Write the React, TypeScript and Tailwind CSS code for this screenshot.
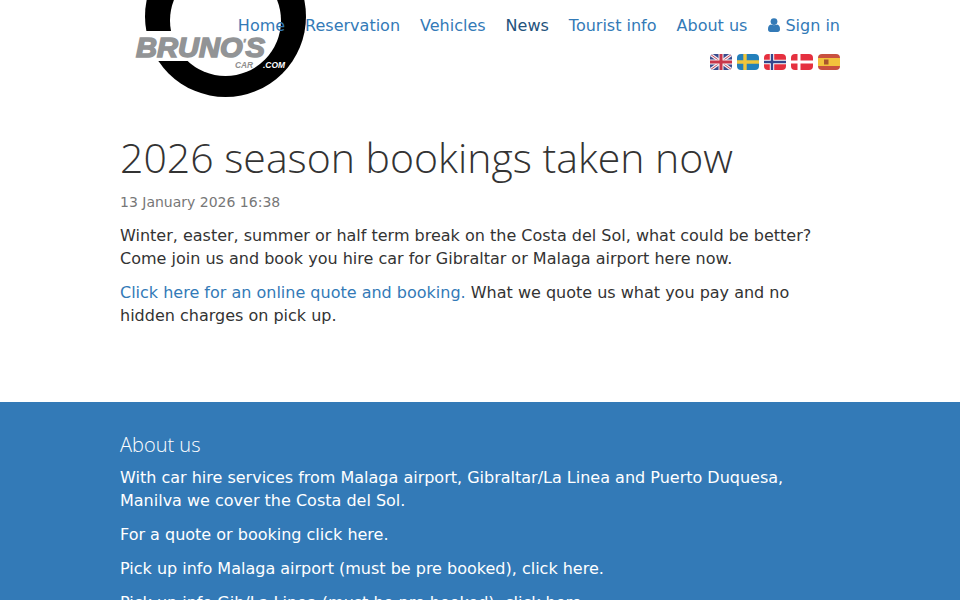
const navItems = ['Home', 'Reservation', 'Vehicles', 'News', 'Tourist info', 'About us']

const Logo = () => (
  <svg className="absolute left-0 top-0" width="200" height="105" viewBox="0 0 200 105" aria-label="Brunos Car">
    <circle cx="105.5" cy="16.5" r="80.5" fill="#000" />
    <circle cx="105.5" cy="20.5" r="55.5" fill="#fff" />
    {/* white band behind the wordmark */}
    <path d="M10 31 L70 31 L70 61 L10 61 Z" fill="#fff" />
    <text
      x="16"
      y="56.5"
      textLength="129"
      lengthAdjust="spacingAndGlyphs"
      fontFamily="Liberation Sans, sans-serif"
      fontWeight="700"
      fontStyle="italic"
      fontSize="27"
      fill="#929496"
      stroke="#929496"
      strokeWidth="1.5"
    >
      BRUNO
      <tspan fontSize="12" dy="-9" strokeWidth="0.5">
        '
      </tspan>
      <tspan dy="9">S</tspan>
    </text>
    <text x="115" y="68" textLength="18" lengthAdjust="spacingAndGlyphs" fontFamily="Liberation Sans, sans-serif" fontWeight="700" fontStyle="italic" fontSize="8.5" fill="#8f8f8f">
      CAR
    </text>
    <text x="143" y="68" textLength="22" lengthAdjust="spacingAndGlyphs" fontFamily="Liberation Sans, sans-serif" fontWeight="700" fontStyle="italic" fontSize="8.5" fill="#fff">
      .COM
    </text>
  </svg>
)

const Flag = ({ children }: { children: React.ReactNode }) => (
  <svg width="22" height="16" viewBox="0 0 22 16" className="rounded-[4px]">
    {children}
  </svg>
)

const Flags = () => (
  <div className="flex justify-end gap-[5px]">
    <Flag>
      <rect width="22" height="16" fill="#3a4a8c" />
      <path d="M0 0L22 16M22 0L0 16" stroke="#f4f0f2" strokeWidth="3.2" />
      <path d="M0 0L22 16M22 0L0 16" stroke="#c8475c" strokeWidth="1" />
      <path d="M11 0V16M0 8H22" stroke="#f4f0f2" strokeWidth="5" />
      <path d="M11 0V16M0 8H22" stroke="#c8354a" strokeWidth="3" />
    </Flag>
    <Flag>
      <rect width="22" height="16" fill="#2380bb" />
      <path d="M8 0V16M0 8H22" stroke="#f0c53c" strokeWidth="3.4" />
    </Flag>
    <Flag>
      <rect width="22" height="16" fill="#e5303f" />
      <path d="M8 0V16M0 8H22" stroke="#fff" strokeWidth="4.4" />
      <path d="M8 0V16M0 8H22" stroke="#34478c" strokeWidth="2.4" />
    </Flag>
    <Flag>
      <rect width="22" height="16" fill="#e5303f" />
      <path d="M8 0V16M0 8H22" stroke="#fff" strokeWidth="3" />
    </Flag>
    <Flag>
      <rect width="22" height="16" fill="#c8503f" />
      <rect y="4" width="22" height="8" fill="#f2c23c" />
      <rect x="6" y="5.5" width="4.5" height="5" fill="#a8552c" />
    </Flag>
  </div>
)

const UserIcon = () => (
  <svg width="12" height="14" viewBox="0 0 12 14" fill="#337ab7" className="mr-[5px] inline-block align-[-1px]">
    <circle cx="6" cy="3.6" r="3.4" />
    <path d="M0 11.2C0 8.6 1 6.9 3 6.6C4 7.4 8 7.4 9 6.6C11 6.9 12 8.6 12 11.2C12 13 11 14 9.6 14H2.4C1 14 0 13 0 11.2Z" />
  </svg>
)

export default function App() {
  return (
    <div className="h-[600px] overflow-hidden bg-white font-['DejaVu_Sans',sans-serif] text-base leading-[23px] text-[#333]">
      {/* Header */}
      <header className="relative mx-auto h-[103px] w-[720px]">
        <Logo />
        <div className="absolute right-0 top-[14px] flex flex-col">
          <nav className="flex justify-end gap-5">
            {navItems.map(item => (
              <a key={item} className={item === 'News' ? 'text-[#23527c]' : 'text-[#337ab7]'}>
                {item}
              </a>
            ))}
            <a className="ml-px text-[#337ab7]">
              <UserIcon />
              Sign in
            </a>
          </nav>
          <div className="mt-[17px]">
            <Flags />
          </div>
        </div>
      </header>

      {/* Article */}
      <main className="mx-auto h-[299px] w-[720px] pt-[26px]">
        <h1 className="font-['Open_Sans',sans-serif] text-[41px] font-light leading-[56px] text-[#333]">
          2026 season bookings taken now
        </h1>
        <p className="mt-[7px] text-sm leading-[20px] text-[#777]">13 January 2026 16:38</p>
        <p className="mt-[12px]">
          Winter, easter, summer or half term break on the Costa del Sol, what could be better? Come join us and book you hire car for Gibraltar or Malaga airport here now.
        </p>
        <p className="mt-[11px]">
          <a className="text-[#337ab7]">Click here for an online quote and booking.</a> What we quote us what you pay and no hidden charges on pick up.
        </p>
      </main>

      {/* Footer */}
      <footer className="h-[198px] bg-[#337ab7] text-white">
        <div className="mx-auto w-[720px] pt-[29px]">
          <h3 className="font-['Open_Sans',sans-serif] text-xl font-light leading-[28px]">About us</h3>
          <p className="mt-[7px]">
            With car hire services from Malaga airport, Gibraltar/La Linea and Puerto Duquesa, Manilva we cover the Costa del Sol.
          </p>
          <p className="mt-[11px]">For a quote or booking click here.</p>
          <p className="mt-[11px]">Pick up info Malaga airport (must be pre booked), click here.</p>
          <p className="mt-[11px]">Pick up info Gib/La Linea (must be pre booked), click here.</p>
        </div>
      </footer>
    </div>
  )
}
